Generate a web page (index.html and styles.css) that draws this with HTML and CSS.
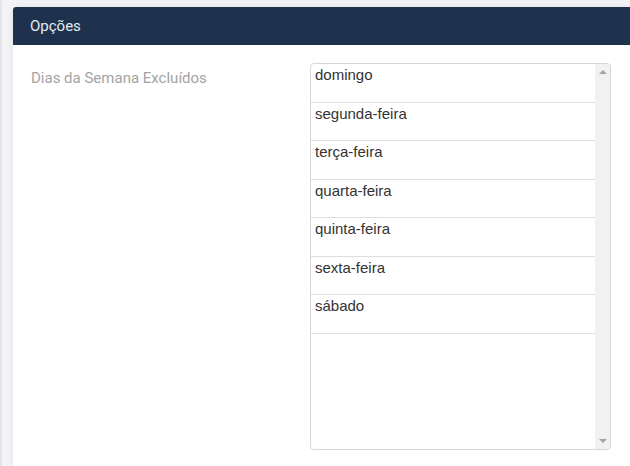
FILE: index.html
```html
<!DOCTYPE html>
<html lang="pt">
<head>
<meta charset="utf-8">
<link rel="stylesheet" href="styles.css">
</head>
<body>
<div class="page">
  <section class="panel">
    <header class="panel-head">Opções</header>
    <div class="panel-body">
      <label class="field-label">Dias da Semana Excluídos</label>
      <div class="listbox">
        <div class="options">
          <div class="opt">domingo</div>
          <div class="opt">segunda-feira</div>
          <div class="opt">terça-feira</div>
          <div class="opt">quarta-feira</div>
          <div class="opt">quinta-feira</div>
          <div class="opt">sexta-feira</div>
          <div class="opt">sábado</div>
        </div>
        <div class="scrollbar">
          <span class="arrow arrow-up"></span>
          <span class="arrow arrow-down"></span>
        </div>
      </div>
    </div>
  </section>
</div>
</body>
</html>
```

FILE: styles.css
```css
html, body {
  margin: 0;
  padding: 0;
  height: 100%;
  overflow: hidden;
}
body {
  background: #f4f4f6;
}
.page {
  border-left: 2px solid #e4e4ea;
  padding: 7px 0 0 11px;
  height: 100%;
  box-sizing: border-box;
}
.panel {
  background: #fff;
  border-radius: 3px 0 0 0;
  box-shadow: 0 0 8px rgba(0, 0, 0, 0.07);
  margin-right: -10px;
  height: 100%;
}
.panel-head {
  background: #1f324d;
  color: #e3e9f0;
  font-family: Roboto, sans-serif;
  font-size: 15px;
  height: 38px;
  line-height: 38px;
  padding-left: 17px;
  border-radius: 3px 0 0 0;
}
.panel-body {
  display: flex;
  padding: 18px 0 0 18px;
}
.field-label {
  width: 279px;
  font-family: Roboto, sans-serif;
  font-size: 15px;
  color: #a3a3a3;
  padding-top: 6px;
}
.listbox {
  display: flex;
  width: 301px;
  height: 387px;
  box-sizing: border-box;
  border: 1px solid #d7d7d7;
  border-radius: 4px;
  overflow: hidden;
  font-family: "Liberation Sans", Arial, sans-serif;
  font-size: 15px;
  color: #333;
}
.options {
  flex: 1;
}
.opt {
  height: 38.5px;
  box-sizing: border-box;
  border-bottom: 1px solid #dedede;
  padding: 2px 0 0 4px;
  line-height: 18px;
}
.scrollbar {
  width: 15px;
  background: #f1f1f1;
  display: flex;
  flex-direction: column;
  justify-content: space-between;
  align-items: center;
  padding: 6px 0 6px;
  box-sizing: border-box;
}
.arrow {
  width: 0;
  height: 0;
  border-left: 4px solid transparent;
  border-right: 4px solid transparent;
}
.arrow-up {
  border-bottom: 4px solid #a3a3a3;
}
.arrow-down {
  border-top: 4px solid #a3a3a3;
}
```
